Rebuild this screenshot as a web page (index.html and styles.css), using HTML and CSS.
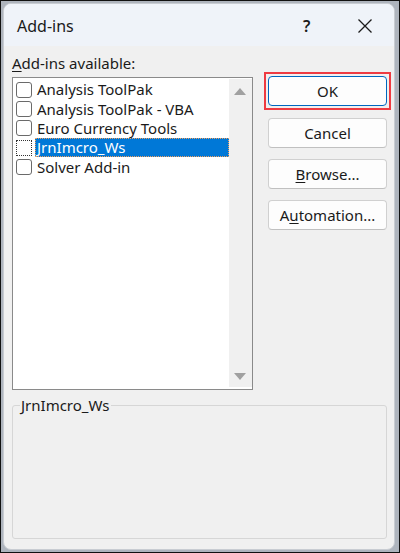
FILE: index.html
```html
<!DOCTYPE html>
<html>
<head>
<meta charset="utf-8">
<link rel="stylesheet" href="styles.css">
</head>
<body>
<div class="frame">
  <div class="window">
    <div class="titlebar">
      <span class="title">Add-ins</span>
      <span class="help">?</span>
      <span class="close">
        <svg width="16" height="16" viewBox="0 0 16 16"><path d="M1.5 1.5 L14.5 14.5 M14.5 1.5 L1.5 14.5" stroke="#1b1b1b" stroke-width="1.3" fill="none"/></svg>
      </span>
    </div>
    <div class="content">
      <div class="top">
        <div class="left">
          <div class="label"><u>A</u>dd-ins available:</div>
          <div class="listbox">
            <div class="items">
              <div class="item"><span class="cb"></span><span class="txt">Analysis ToolPak</span></div>
              <div class="item"><span class="cb"></span><span class="txt">Analysis ToolPak - VBA</span></div>
              <div class="item"><span class="cb"></span><span class="txt">Euro Currency Tools</span></div>
              <div class="item sel"><span class="cb focus"></span><span class="txt">JrnImcro_Ws</span></div>
              <div class="item"><span class="cb"></span><span class="txt">Solver Add-in</span></div>
            </div>
            <div class="scroll">
              <svg width="12" height="8" viewBox="0 0 12 8"><path d="M0 8 L6 1 L12 8 Z" fill="#a0a0a0"/></svg>
              <svg width="12" height="8" viewBox="0 0 12 8"><path d="M0 0 L6 7 L12 0 Z" fill="#a0a0a0"/></svg>
            </div>
          </div>
        </div>
        <div class="buttons">
          <div class="okwrap"><button class="btn default">OK</button></div>
          <button class="btn">Cancel</button>
          <button class="btn"><u>B</u>rowse...</button>
          <button class="btn">A<u>u</u>tomation...</button>
        </div>
      </div>
      <fieldset class="group">
        <legend>JrnImcro_Ws</legend>
      </fieldset>
    </div>
  </div>
</div>
</body>
</html>
```
FILE: styles.css
```css
* { box-sizing: border-box; }
html, body { margin: 0; padding: 0; }
body { width: 400px; height: 553px; font-family: "Noto Sans", "Open Sans", sans-serif; color: #1a1a1a; }
.frame {
  width: 400px; height: 553px;
  border: 1px solid #111;
  background: #aeb4bd;
  padding: 2px 4px 2px 2px;
}
.window {
  height: 100%;
  background: #f0f0f0;
  border-radius: 8px;
  border: 1px solid #c8ccd2;
  overflow: hidden;
  display: flex; flex-direction: column;
}
.titlebar {
  height: 42px; flex: none;
  background: #eff3f9;
  display: flex; align-items: center;
  padding-left: 13px;
  padding-top: 1px;
}
.title { font-size: 16px; flex: 1; }
.help { font-size: 16px; width: 20px; margin-right: 34px; font-weight: 600; }
.close { width: 16px; height: 16px; margin-right: 21px; display: flex; }
.content { flex: 1; padding: 8px 7px 10px 8px; display: flex; flex-direction: column; }
.top { display: flex; }
.left { width: 242px; }
.label { font-size: 15px; height: 23px; line-height: 18px; }
.label u, .btn u { text-decoration-thickness: 1px; text-underline-offset: 2px; }
.listbox {
  height: 313px;
  background: #fff;
  border: 1px solid #8a8a8a;
  display: flex;
  padding: 1px 0 2px 2px;
}
.items { flex: 1; padding-top: 1px; }
.item { height: 19.4px; display: flex; align-items: center; font-size: 15px; }
.cb {
  width: 16px; height: 16px; flex: none;
  border: 1px solid #6a6a6a; border-radius: 3px; background: #fff;
  margin-left: 1px; margin-right: 4px;
}
.cb.focus { border: 1px dotted #333; border-radius: 0; margin-right: 3px; }
.txt { padding: 0 2px 0 1px; line-height: 19px; }
.sel .txt { flex: 1; background: #0078d7; color: #fff; outline: 1px dotted #f0a060; outline-offset: -1px; padding-left: 2px; }
.scroll {
  width: 23px; background: #f0f0f0;
  display: flex; flex-direction: column; justify-content: space-between; align-items: center;
  padding: 8px 0 6px;
}
.buttons { width: 129px; margin-left: 6px; display: flex; flex-direction: column; align-items: flex-end; padding-top: 22px; gap: 11px; }
.okwrap { border: 2px solid #ee3b42; padding: 2px; margin-right: -4px; margin-top: -4px; margin-bottom: -3px; }
.btn {
  width: 119px; height: 30px;
  background: #fdfdfd;
  border: 1px solid #d0d0d0;
  border-bottom-color: #c0c0c0;
  border-radius: 4px;
  font-family: inherit; font-size: 15px; color: #1a1a1a;
  padding: 0;
}
.btn.default { border: 1.5px solid #0067c0; }
.group {
  margin: 5px 0 0 0;
  flex: 1;
  border: 1px solid #d6d6d6;
  border-radius: 3px;
  padding: 0 8px;
}
.group legend { font-size: 15px; padding: 0 1px; margin-left: -1px; }
```
